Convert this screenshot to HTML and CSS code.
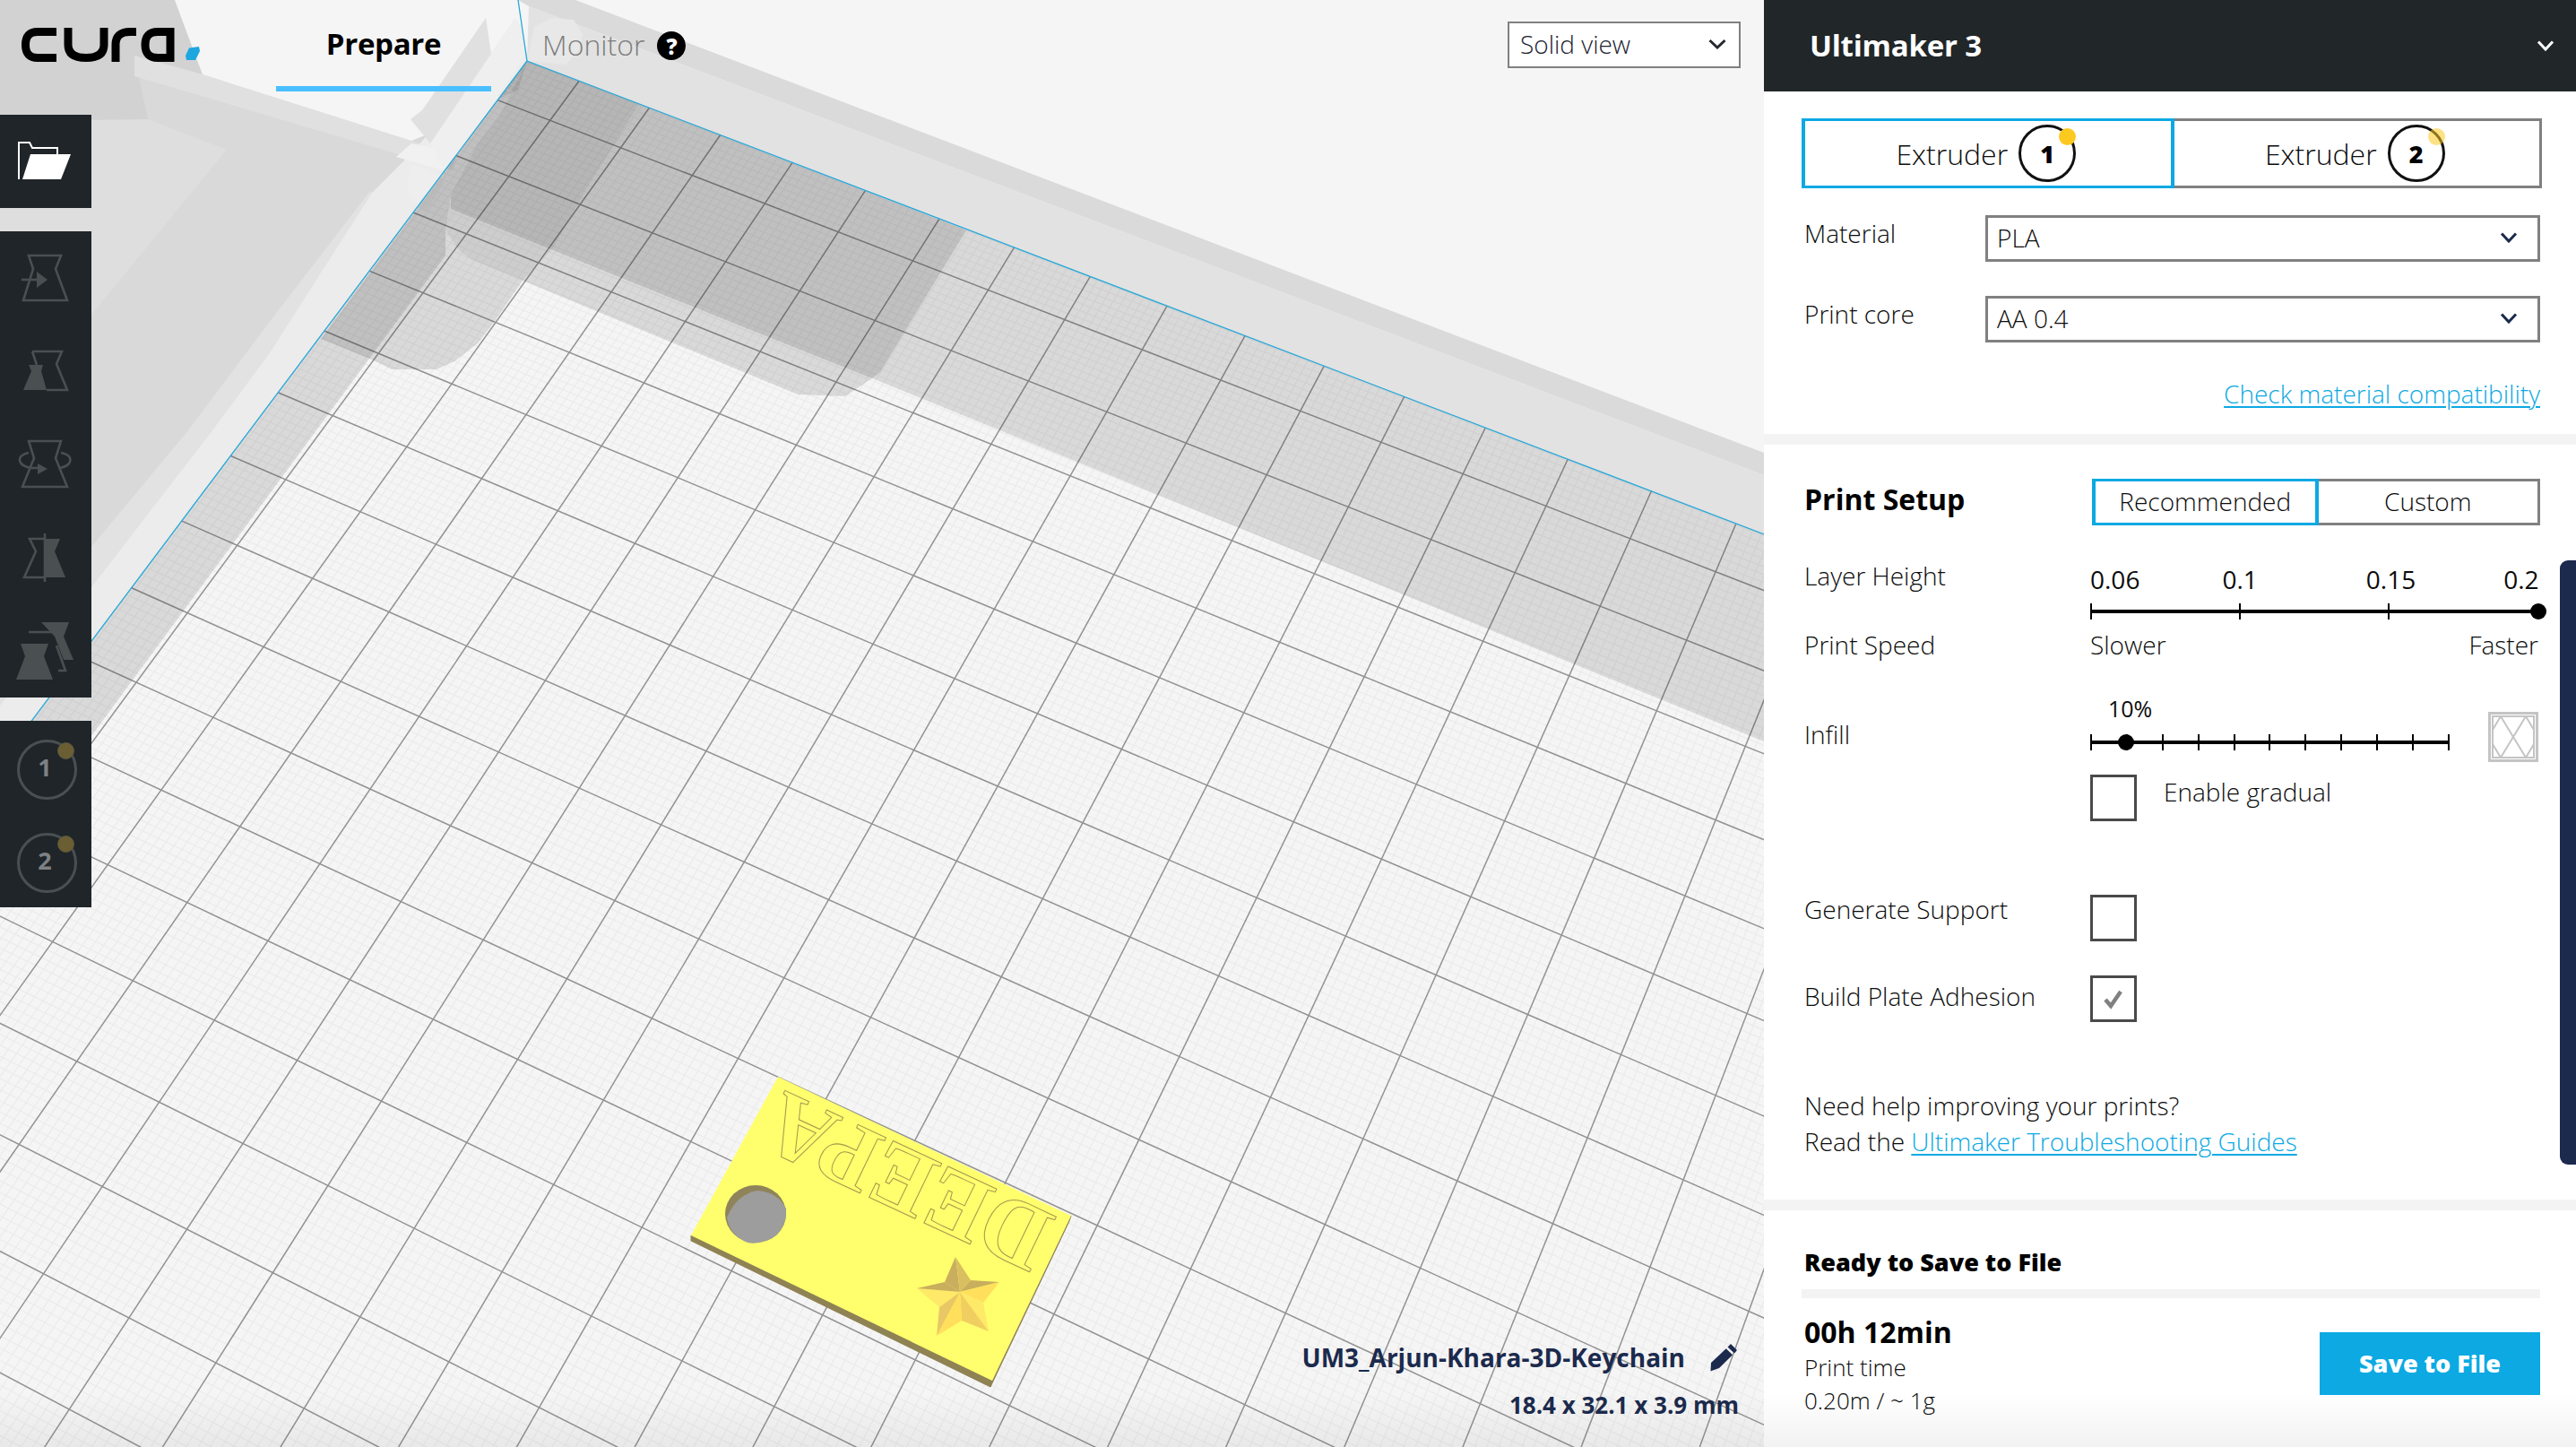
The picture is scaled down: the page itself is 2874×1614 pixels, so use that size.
FILE: index.html
```html
<!DOCTYPE html>
<html lang="en">
<head>
<meta charset="utf-8">
<title>Cura</title>
<link rel="stylesheet" href="styles.css">
</head>
<body>
<div class="app">
  <main class="viewport">
    <svg class="scene" viewBox="0 0 1968 1614" width="1968" height="1614">
      <rect class="s-bg" width="1968" height="1614"/>
      <!-- build volume, right of the corner -->
      <polygon class="s-top-band" points="578,0 642,0 1968,505 1968,530 590,7"/>
      <polygon class="s-top-wall" points="590,7 1968,530 1968,596 588,68"/>
      <polygon class="s-bump" points="596,30 615,20 640,22 650,38 646,55 632,72 588,68"/>
      <!-- build volume, left of the corner -->
      <polygon class="s-left-base" points="0,0 195,0 226,83 459,157 578,100 588,68 0,851"/>
      <polygon class="s-left-soft" points="0,135 165,133 253,167 103,350 0,500"/>
      <polygon class="s-left-dark" points="0,0 195,0 226,83 150,62 165,133 0,135"/>
      <polygon class="s-left-white" points="195,0 578,0 586,62 500,140 459,157 226,83"/>
      <polygon class="s-left-band" points="150,62 226,83 459,157 510,172 505,190 150,85"/>
      <polygon class="s-left-mid" points="0,745 102,610 210,480 300,360 413,213 415,215 300,395 237,480 102,655 0,787"/>
      <polygon class="s-left-edge" points="588,68 0,851 0,787 102,655 237,480 300,395 415,215 460,170 520,100 575,20 580,30"/>
      <polygon class="s-left-cross" points="459,160 511,170 494,190 442,175"/>
      <path class="s-left-lobe" d="M460 183Q450 205 458 218T475 236L495 205 490 195Z"/>
      <polygon class="s-spike" points="542,20 548,60 555,70 480,160 458,133 471,123"/>
      <polygon class="s-column" points="548,60 575,20 582,30 586,62 520,160 495,190 480,160"/>
      <g id="grid"></g>
      <!-- disallowed areas -->
      <polygon class="s-zone" points="588,68 1968,596 1968,827 973,422 820,361 503,233 503,217 533,160 557,130"/>
      <polygon class="s-zone" points="588,68 0,851 0,960 102,821 353,480 497,285 497,257 503,217 533,160 557,130"/>
      <polygon class="s-zone" points="588,68 1078,257 982,415 973,422 943,442 890,440 583,313 553,357 533,383 507,403 487,412 437,412 417,402 358,378"/>
      <polygon class="s-zone-soft" points="588,68 713,116 653,213 617,277 583,313 527,290 513,280 497,257 503,217 533,160 557,130"/>
      <!-- plate edges -->
      <polyline class="s-edge" points="578,0 588,68 1968,596"/>
      <line class="s-edge" x1="588" y1="68" x2="0" y2="851"/>
      <!-- model -->
      <g class="model">
        <polygon class="m-side" points="771,1378 771,1384 1105,1547 1107,1540"/>
        <polygon class="m-side" points="1195,1356 1193,1362 1105,1547 1107,1540"/>
        <polygon class="m-top" points="868,1201 1195,1356 1107,1540 771,1378"/>
        <ellipse class="m-wall" cx="843" cy="1354" rx="34" ry="32"/>
        <path class="m-hole" d="M811 1358Q822 1332 845 1328Q868 1330 877 1348Q878 1366 866 1378Q850 1389 834 1386Q814 1378 811 1358Z"/>
        <text class="m-text" transform="matrix(-0.92 -0.428 0.4545 -0.94 1180 1358)">DEEPA</text>
        <g class="star">
          <polygon class="f1" points="1071,1441 1054,1430 1066,1402"/>
          <polygon class="f2" points="1071,1441 1066,1402 1083,1428"/>
          <polygon class="f1" points="1071,1441 1083,1428 1115,1430"/>
          <polygon class="f3" points="1071,1441 1115,1430 1097,1453"/>
          <polygon class="f4" points="1071,1441 1097,1453 1103,1485"/>
          <polygon class="f5" points="1071,1441 1103,1485 1073,1473"/>
          <polygon class="f3" points="1071,1441 1073,1473 1045,1490"/>
          <polygon class="f6" points="1071,1441 1045,1490 1048,1458"/>
          <polygon class="f4" points="1071,1441 1048,1458 1023,1437"/>
          <polygon class="f1" points="1071,1441 1023,1437 1054,1430"/>
        </g>
      </g>
    </svg>

    <header class="topbar">
      <svg class="logo" viewBox="0 0 230 100" width="230" height="100" role="img" aria-label="cura logo">
        <g class="logo-stroke">
          <path d="M63 35.5H42Q28.5 35.5 28.5 50T42 64.5H63"/>
          <path d="M76 31V50Q76 64.5 96 64.5T116 50V31"/>
          <path d="M129 69V50Q129 35.5 145 35.5H152"/>
          <path d="M190 69V35.5H176Q162 35.5 162 50T176 64.5H190"/>
        </g>
        <path class="logo-dot" d="M211 53.5L222 52 223 57 218 67H208L207 62Z"/>
      </svg>
      <nav class="tabs">
        <span class="tab tab-active">Prepare</span>
        <span class="tab tab-monitor">Monitor</span>
        <span class="help">?</span>
      </nav>
      <div class="viewmode">
        <span>Solid view</span>
        <svg class="chev" viewBox="0 0 20 12" width="20" height="12"><path d="M1.5 2L10 10 18.5 2"/></svg>
      </div>
    </header>

    <aside class="toolbar">
      <div class="tool-group">
        <div class="tool">
          <svg viewBox="0 0 80 80" width="80" height="80">
            <path class="i-open-back" d="M10 60V19H22L25 25H53V32"/>
            <path class="i-open-front" d="M23 32H68L57 60H14Z"/>
          </svg>
        </div>
      </div>
      <div class="tool-group">
        <div class="tool">
          <svg viewBox="0 0 80 80" width="80" height="80">
            <path class="i-line" d="M21 15H57L51 30 64 65H15L26 30Z"/>
            <path class="i-line" d="M13 42H32"/>
            <path class="i-fill" d="M30 33L42 42 30 51Z"/>
          </svg>
        </div>
        <div class="tool">
          <svg viewBox="0 0 80 80" width="80" height="80">
            <path class="i-line" d="M25 18H58L52 32 64 61H41M25 18L30 33"/>
            <path class="i-fill" d="M21 33H37L35 40 41 61H15L24 40Z"/>
          </svg>
        </div>
        <div class="tool">
          <svg viewBox="0 0 80 80" width="80" height="80">
            <path class="i-line" d="M21 14H57L51 33 64 65H14L27 33Z"/>
            <path class="i-line" d="M21 27C6 30 8 42 25 44H32M57 27C72 30 70 41 56 44"/>
            <path class="i-fill" d="M31 39L42 45 31 51Z"/>
          </svg>
        </div>
        <div class="tool">
          <svg viewBox="0 0 80 80" width="80" height="80">
            <path class="i-line" d="M39 13V67M39 19H22L29 33 16 62H39"/>
            <path class="i-fill" d="M39 19H56L50 33 62 62H39Z"/>
          </svg>
        </div>
        <div class="tool">
          <svg viewBox="0 0 80 80" width="80" height="80">
            <path class="i-fill" d="M35 8H66L60 24 71 50H60L50 24Z"/>
            <path class="i-line" d="M21 19H47M54 62H62L52 34"/>
            <path class="i-fill" d="M12 32H43L38 46 48 72H7L17 46Z"/>
          </svg>
        </div>
      </div>
      <div class="tool-group">
        <div class="tool ext-tool"><span class="ext-num">1</span><span class="ext-dot"></span></div>
        <div class="tool ext-tool"><span class="ext-num">2</span><span class="ext-dot"></span></div>
      </div>
    </aside>

    <div class="objinfo">
      <div class="objname">
        <span>UM3_Arjun-Khara-3D-Keychain</span>
        <svg viewBox="0 0 30 32" width="30" height="32"><path class="pencil" d="M23 1L30 8 27 11.5 19.5 4.5ZM17.8 6.3L25 13.3 10 28 3 30.5 0.5 31.5 1 22Z"/></svg>
      </div>
      <div class="objsize">18.4 x 32.1 x 3.9 mm</div>
    </div>
  </main>

  <section class="sidebar">
    <div class="machine">
      <span class="machine-name">Ultimaker 3</span>
      <svg class="chev-white" viewBox="0 0 20 12" width="20" height="12"><path d="M2 1.5L10 10 18 1.5"/></svg>
    </div>

    <div class="panel panel-printer">
      <div class="ext-tabs">
        <div class="ext-tab ext-tab-active">
          <span>Extruder</span>
          <span class="badge">1<span class="badge-dot"></span></span>
        </div>
        <div class="ext-tab">
          <span>Extruder</span>
          <span class="badge">2<span class="badge-dot badge-dot-faint"></span></span>
        </div>
      </div>
      <div class="sel-row sel-row-first">
        <span class="lab">Material</span>
        <div class="select"><span>PLA</span><svg class="chev chev-navy" viewBox="0 0 20 12" width="20" height="12"><path d="M2 1.5L10 10 18 1.5"/></svg></div>
      </div>
      <div class="sel-row">
        <span class="lab">Print core</span>
        <div class="select"><span>AA 0.4</span><svg class="chev chev-navy" viewBox="0 0 20 12" width="20" height="12"><path d="M2 1.5L10 10 18 1.5"/></svg></div>
      </div>
      <div class="compat"><a class="link">Check material compatibility</a></div>
    </div>

    <div class="panel panel-setup">
      <div class="setup-head">
        <span class="setup-title">Print Setup</span>
        <div class="mode-tabs">
          <span class="mode mode-active">Recommended</span>
          <span class="mode">Custom</span>
        </div>
      </div>

      <div class="grid-row layer-row">
        <span class="lab">Layer Height</span>
        <div class="ctrl">
          <div class="layer-values"><span>0.06</span><span>0.1</span><span>0.15</span><span>0.2</span></div>
          <div class="slider slider-layer">
            <i class="tick"></i><i class="tick"></i><i class="tick"></i><i class="tick tick-hide"></i>
            <b class="knob knob-end"></b>
          </div>
        </div>
      </div>

      <div class="grid-row speed-row">
        <span class="lab">Print Speed</span>
        <div class="speed-values"><span>Slower</span><span>Faster</span></div>
      </div>

      <div class="grid-row infill-row">
        <span class="lab infill-lab">Infill</span>
        <div class="ctrl">
          <div class="infill-top">
            <div class="infill-slide">
              <div class="infill-pct">10%</div>
              <div class="slider slider-infill">
                <i class="tick"></i><i class="tick"></i><i class="tick"></i><i class="tick"></i><i class="tick"></i><i class="tick"></i><i class="tick"></i><i class="tick"></i><i class="tick"></i><i class="tick"></i><i class="tick"></i>
                <b class="knob knob-ten"></b>
              </div>
            </div>
            <svg class="infill-icon" viewBox="0 0 56 56" width="56" height="56">
              <rect class="ii-outer" x="1.5" y="1.5" width="53" height="53"/>
              <rect class="ii-inner" x="5" y="5" width="46" height="46"/>
              <path class="ii-x" d="M14 5L42 51M42 5L14 51M5 20L14 5M42 5L51 20M5 36L14 51M42 51L51 36"/>
            </svg>
          </div>
          <div class="gradual">
            <span class="check"></span>
            <span class="gradual-lab">Enable gradual</span>
          </div>
        </div>
      </div>

      <div class="grid-row support-row">
        <span class="lab lab-support">Generate Support</span>
        <span class="check"></span>
      </div>
      <div class="grid-row adhesion-row">
        <span class="lab lab-adhesion">Build Plate Adhesion</span>
        <span class="check">
          <svg viewBox="0 0 46 46" width="46" height="46"><path class="tick-mark" d="M14 24L20 31 31 15"/></svg>
        </span>
      </div>

      <p class="help-text">Need help improving your prints?<br>Read the <a class="link">Ultimaker Troubleshooting Guides</a></p>
      <div class="scrollbar"></div>
    </div>

    <div class="panel panel-save">
      <div class="save-title">Ready to Save to File</div>
      <div class="progress"></div>
      <div class="save-row">
        <div class="save-info">
          <div class="save-time">00h 12min</div>
          <div class="save-line">Print time</div>
          <div class="save-line">0.20m / ~ 1g</div>
        </div>
        <div class="save-btn">Save to File</div>
      </div>
    </div>
  </section>
  <div class="bottom-fade"></div>
</div>
<script src="script.js"></script>
</body>
</html>
```
FILE: styles.css
```css
* { box-sizing: border-box; }
html, body { margin: 0; padding: 0; }
body {
  width: 2874px;
  height: 1614px;
  overflow: hidden;
  font-family: "Open Sans", "Liberation Sans", sans-serif;
  font-size: 28px;
  font-weight: 300;
  color: #0c0c0c;
  background: #f4f4f4;
}
.app { position: relative; display: flex; width: 2874px; height: 1614px; overflow: hidden; }

/* viewport */
.viewport { position: relative; flex: 0 0 1968px; height: 1614px; overflow: hidden; }
.scene { position: absolute; left: 0; top: 0; display: block; }
.s-bg { fill: #f5f5f5; }
.s-top-band { fill: #dadada; }
.s-top-wall { fill: #e2e2e2; }
.s-bump { fill: #e8e8e8; }
.s-left-base { fill: #d9d9d9; }
.s-left-soft { fill: #dedede; }
.s-left-dark { fill: #d2d2d2; }
.s-left-white { fill: #f5f5f5; }
.s-left-band { fill: #e0e0e0; }
.s-left-mid { fill: #e2e2e2; }
.s-left-edge { fill: #ececec; }
.s-left-cross { fill: #f1f1f1; }
.s-left-lobe { fill: #eeeeee; }
.s-spike { fill: #e0e0e0; }
.s-column { fill: #efefef; }
.s-zone { fill: #000; fill-opacity: .115; }
.s-zone-soft { fill: #000; fill-opacity: .05; }
.s-edge { fill: none; stroke: #25a7d9; stroke-width: 1.3; }
.g-major { stroke: #929292; stroke-width: 1.5; }
.g-minor { stroke: #ebebeb; stroke-width: 1.2; }
.m-side { fill: #8f8253; stroke: #8f8253; stroke-width: 1; }
.m-top { fill: #ffff6d; }
.m-wall { fill: #8f8459; }
.m-hole { fill: #9d9d9d; }
.m-text {
  font-family: "Liberation Serif", serif;
  font-weight: 700;
  font-size: 100px;
  fill: #ffff6d;
  stroke: #a8974f;
  stroke-width: 1;
}
.star .f1 { fill: #c9ae5e; }
.star .f2 { fill: #d9bf5f; }
.star .f3 { fill: #ffdf5c; }
.star .f4 { fill: #ffe968; }
.star .f5 { fill: #f0cf60; }
.star .f6 { fill: #e8c764; }

.topbar { position: relative; display: flex; align-items: flex-start; height: 102px; }
.logo { flex: none; display: block; }
.logo-stroke path { fill: none; stroke: #000; stroke-width: 9; }
.logo-dot { fill: #1ea6e0; }
.tabs { display: flex; align-items: center; height: 102px; margin-left: 78px; }
.tab { display: flex; align-items: center; justify-content: center; height: 102px; }
.tab-active {
  width: 240px;
  font-weight: 700;
  font-size: 33px;
  color: #000;
  letter-spacing: -.3px;
  border-bottom: 6px solid #4abfff;
}
.tab-monitor { margin-left: 57px; padding-bottom: 4px; font-size: 32px; color: #7d7d7d; }
.help {
  display: flex; align-items: center; justify-content: center;
  width: 32px; height: 32px; margin-left: 14px; border-radius: 50%;
  background: #000; color: #fff; font-size: 24px; font-weight: 800;
}
.viewmode {
  display: flex; align-items: center; justify-content: space-between;
  width: 260px; height: 52px; margin: 24px 0 0 auto; margin-right: 26px;
  padding: 0 14px 2px 12px; background: #fff; border: 2px solid #808080; color: #1c2230;
}
.chev path, .chev-white path { fill: none; stroke: #24292e; stroke-width: 3; }
.chev-navy path { stroke: #1b2a4d; }
.chev-white path { stroke: #fff; }

.toolbar { position: absolute; left: 0; top: 128px; width: 102px; display: flex; flex-direction: column; gap: 26px; }
.tool-group { background: #1f2529; }
.tool { position: relative; display: flex; align-items: center; justify-content: center; width: 102px; height: 104px; }
.tool svg { display: block; }
.i-open-back { fill: none; stroke: #fff; stroke-width: 2; }
.i-open-front { fill: #fff; }
.i-line { fill: none; stroke: #4a4f52; stroke-width: 2.6; }
.i-fill { fill: #4a4f52; }
.ext-tool::before {
  content: "";
  position: absolute; left: 19px; top: 21px;
  width: 61px; height: 61px; border-radius: 50%;
  border: 3px solid #4a4f52;
}
.ext-num { position: relative; margin-left: -2px; margin-top: -2px; font-size: 27px; font-weight: 700; color: #7d8184; }
.ext-dot {
  position: absolute; left: 64px; top: 24px;
  width: 19px; height: 19px; border-radius: 50%;
  background: #6a5e32; border: 1px solid #5c573f;
}

.objinfo { position: absolute; right: 28px; top: 1490px; display: flex; flex-direction: column; align-items: flex-end; color: #1b2a4d; font-weight: 700; }
.objname { display: flex; align-items: center; gap: 28px; height: 48px; margin-right: 2px; font-size: 28px; }
.pencil { fill: #1b2a4d; }
.objsize { margin-top: 9px; font-size: 26px; line-height: 40px; }

/* sidebar */
.sidebar { display: flex; flex-direction: column; flex: 0 0 906px; height: 1614px; background: #f3f3f3; }
.machine { display: flex; align-items: center; justify-content: space-between; flex: none; height: 102px; padding: 0 24px 0 51px; background: #212629; }
.machine-name { margin-bottom: 2px; color: #fff; font-size: 33px; font-weight: 700; letter-spacing: -.2px; }
.panel { position: relative; flex: none; background: #fff; padding: 0 38px 0 42px; }
.panel-printer { height: 382px; padding-top: 30px; }
.ext-tabs { display: flex; height: 78px; }
.ext-tab {
  position: relative; display: flex; align-items: center; justify-content: center; gap: 12px;
  flex: 1; padding-right: 4px; border: 3px solid #808080; border-left-width: 0; font-size: 32px;
}
.ext-tab-active { border: 3px solid #0ca9e3; border-left-width: 4px; border-right-width: 4px; }
.badge {
  position: relative; display: flex; align-items: center; justify-content: center;
  width: 64px; height: 64px; border-radius: 50%; border: 3px solid #111;
  font-size: 27px; font-weight: 800; color: #000;
}
.badge-dot { position: absolute; right: -3px; top: 1px; width: 19px; height: 19px; border-radius: 50%; background: #fcc921; }
.badge-dot-faint { opacity: .55; }
.sel-row { display: flex; align-items: flex-start; margin-top: 38px; }
.sel-row-first { margin-top: 30px; }
.lab { display: block; padding-left: 3px; margin-top: -2px; line-height: 40px; }
.sel-row .lab { flex: 0 0 205px; margin-top: 0; }
.select {
  display: flex; align-items: center; justify-content: space-between;
  width: 619px; height: 52px; padding: 0 22px 2px 10px; border: 3px solid #808080;
}
.compat { margin-top: 38px; margin-right: 2px; text-align: right; line-height: 38px; }
.link { color: #0ca9e3; text-decoration: underline; text-underline-offset: 3px; text-decoration-thickness: 1.5px; }

.panel-setup { height: 842px; margin-top: 12px; padding-top: 38px; }
.setup-head { display: flex; justify-content: space-between; align-items: flex-start; height: 52px; margin-right: 2px; }
.setup-title { padding-left: 3px; font-size: 32px; font-weight: 700; line-height: 46px; color: #000; }
.mode-tabs { display: flex; width: 500px; height: 52px; }
.mode { flex: 1; display: flex; align-items: center; justify-content: center; padding-bottom: 2px; border: 3px solid #808080; border-left-width: 0; }
.mode-active { border: 3px solid #0ca9e3; border-left-width: 4px; border-right-width: 4px; padding-bottom: 2px; }
.grid-row { display: grid; grid-template-columns: 322px 1fr; }
.grid-row .lab { line-height: 36px; }
.ctrl { display: flex; flex-direction: column; }
.layer-row { margin-top: 40px; }
.layer-values { display: flex; padding-top: 2px; height: 40px; font-size: 28px; font-weight: 500; line-height: 36px; }
.layer-values span:nth-child(2) { margin-left: 92px; }
.layer-values span:nth-child(3) { margin-left: 121px; }
.layer-values span:nth-child(4) { margin-left: 98px; }
.slider { position: relative; display: flex; justify-content: space-between; height: 24px; margin-top: 4px; background: linear-gradient(#000, #000) center / 100% 4px no-repeat; }
.slider-layer { width: 500px; }
.slider-infill { width: 401px; margin-top: 8px; }
.tick { display: block; width: 2px; height: 18px; margin-top: 3px; background: #000; }
.tick-hide { visibility: hidden; }
.knob { position: absolute; top: 3px; width: 18px; height: 18px; border-radius: 50%; background: #000; }
.knob-end { left: 491px; }
.knob-ten { left: 31px; }
.speed-row { margin-top: 9px; }
.speed-values { display: flex; justify-content: space-between; width: 500px; margin-top: -2px; line-height: 36px; }
.infill-row { margin-top: 37px; }
.infill-lab { margin-top: 27px; }
.infill-top { display: flex; justify-content: space-between; width: 500px; height: 66px; }
.infill-slide { width: 401px; }
.infill-pct { padding-left: 20px; margin-top: -2px; font-size: 25px; font-weight: 500; line-height: 36px; }
.infill-icon { margin-top: 20px; flex: none; }
.ii-outer { fill: none; stroke: #c4c4c4; stroke-width: 3; }
.ii-inner { fill: none; stroke: #c4c4c4; stroke-width: 2; }
.ii-x { fill: none; stroke: #c4c4c4; stroke-width: 2; }
.gradual { display: flex; align-items: flex-start; margin-top: 24px; gap: 30px; }
.gradual-lab { line-height: 38px; }
.check { display: flex; align-items: center; justify-content: center; width: 52px; height: 52px; border: 3px solid #4a4a4a; background: #fff; }
.tick-mark { fill: none; stroke: #808080; stroke-width: 4.5; }
.support-row { margin-top: 82px; }
.lab-support { margin-top: -2px; }
.adhesion-row { margin-top: 38px; }
.lab-adhesion { margin-top: 5px; }
.help-text { margin: 73px 0 0; padding-left: 3px; line-height: 40px; }
.scrollbar { position: absolute; right: 0; top: 129px; width: 18px; height: 674px; border-radius: 9px 0 0 9px; background: #1b2a4d; }

.panel-save { flex: 1; margin-top: 12px; padding-top: 40px; }
.save-title { padding-left: 3px; font-size: 27px; font-weight: 800; line-height: 36px; color: #000; }
.progress { height: 10px; margin-top: 12px; background: #f3f3f3; margin-right: 2px; }
.save-row { display: flex; justify-content: space-between; align-items: flex-start; margin-top: 20px; margin-right: 2px; }
.save-info { padding-left: 3px; }
.save-time { font-size: 32px; font-weight: 700; line-height: 36px; color: #000; }
.save-line { margin-top: 1px; line-height: 36px; font-size: 26px; }
.save-time + .save-line { margin-top: 3px; }
.save-btn {
  display: flex; align-items: center; justify-content: center;
  width: 246px; height: 70px; margin-top: 18px; padding-bottom: 2px;
  background: #0ca9e3; color: #fff; font-size: 27px; font-weight: 800;
}
.bottom-fade { position: absolute; left: 0; right: 0; bottom: 0; height: 60px; background: linear-gradient(rgba(0,0,0,0), rgba(0,0,0,.05)); pointer-events: none; }
```
FILE: script.js
```js
// Build-plate grid: a projective map from plate units (i, j) to screen pixels.
(function () {
  var NS = 'http://www.w3.org/2000/svg';
  var VA = [-11550, -4575], VB = [4186, -4717], O = [588, 68];
  var a = 0.00635, b = 0.01254;
  var I0 = 0.75, J0 = 0.72, IMAX = 27, JMAX = 22;
  var host = document.getElementById('grid');

  function project(i, j) {
    var A = a * i, B = b * j, w = 1 - A - B;
    return [(-VA[0] * A - VB[0] * B + O[0]) / w, (-VA[1] * A - VB[1] * B + O[1]) / w];
  }
  function add(p, q, cls) {
    var l = document.createElementNS(NS, 'line');
    l.setAttribute('x1', p[0].toFixed(1));
    l.setAttribute('y1', p[1].toFixed(1));
    l.setAttribute('x2', q[0].toFixed(1));
    l.setAttribute('y2', q[1].toFixed(1));
    l.setAttribute('class', cls);
    host.appendChild(l);
  }
  function family(start, max, draw, cls, step, every) {
    for (var n = Math.ceil(-start / step); start + n * step <= max; n++) {
      if (every && ((n % every) + every) % every === 0) continue;
      draw(start + n * step, cls);
    }
  }
  function vert(i, cls) { add(project(i, 0), project(i, JMAX), cls); }
  function horz(j, cls) { add(project(0, j), project(IMAX, j), cls); }

  family(I0, IMAX, vert, 'g-minor', 0.1, 10);
  family(J0, JMAX, horz, 'g-minor', 0.1, 10);
  family(I0, IMAX, vert, 'g-major', 1, 0);
  family(J0, JMAX, horz, 'g-major', 1, 0);
})();
```
